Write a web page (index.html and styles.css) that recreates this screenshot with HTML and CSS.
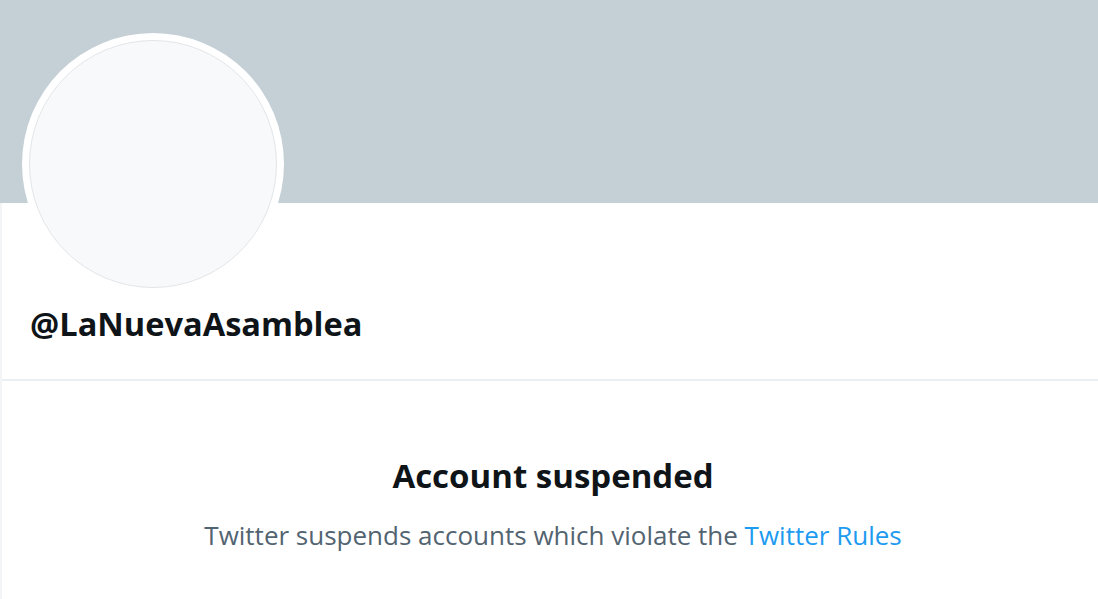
FILE: index.html
```html
<!DOCTYPE html>
<html lang="en">
<head>
    <meta charset="UTF-8">
    <meta name="viewport" content="width=device-width, initial-scale=1.0">
    <title>@LaNuevaAsamblea</title>
    <link rel="stylesheet" href="styles.css">
</head>
<body>
    <div class="page">
        <!-- Cabeçalho do perfil -->
        <div class="banner"></div>
        <div class="profile">
            <div class="avatar"><div class="avatar-inner"></div></div>
            <h1 class="handle">@LaNuevaAsamblea</h1>
        </div>

        <!-- Aviso de conta suspensa -->
        <div class="notice">
            <h2>Account suspended</h2>
            <p>Twitter suspends accounts which violate the <a href="#">Twitter Rules</a></p>
        </div>
    </div>
</body>
</html>
```

FILE: styles.css
```css
/* Estilos básicos */
body { margin: 0; font-family: "Open Sans", "Noto Sans", sans-serif; color: #0f1419; background: #fff; }
.page { border-left: 2px solid #f2f4f5; min-height: 599px; box-sizing: border-box; }

.banner { height: 203px; background: #c4cfd6; margin-left: -2px; }

.profile { display: flow-root; padding: 0 0 0 20px; border-bottom: 2px solid #eceff1; height: 178px; box-sizing: border-box; }
.avatar { width: 262px; height: 262px; border-radius: 50%; background: #fff; margin-top: -170px; padding: 7px; box-sizing: border-box; }
.avatar-inner { width: 100%; height: 100%; border-radius: 50%; background: #f7f9fa; border: 1px solid #e3e6e8; box-sizing: border-box; }

.handle { margin: 7px 0 0 8px; font-size: 32.6px; font-weight: 700; line-height: 44px; }

.notice { text-align: center; padding-top: 73px; padding-left: 6px; }
.notice h2 { margin: 0; font-size: 33px; font-weight: 700; line-height: 44px; }
.notice p { margin: 19px 0 0; font-size: 26px; color: #536471; line-height: 36px; }
.notice a { color: #1d9bf0; text-decoration: none; }
```
